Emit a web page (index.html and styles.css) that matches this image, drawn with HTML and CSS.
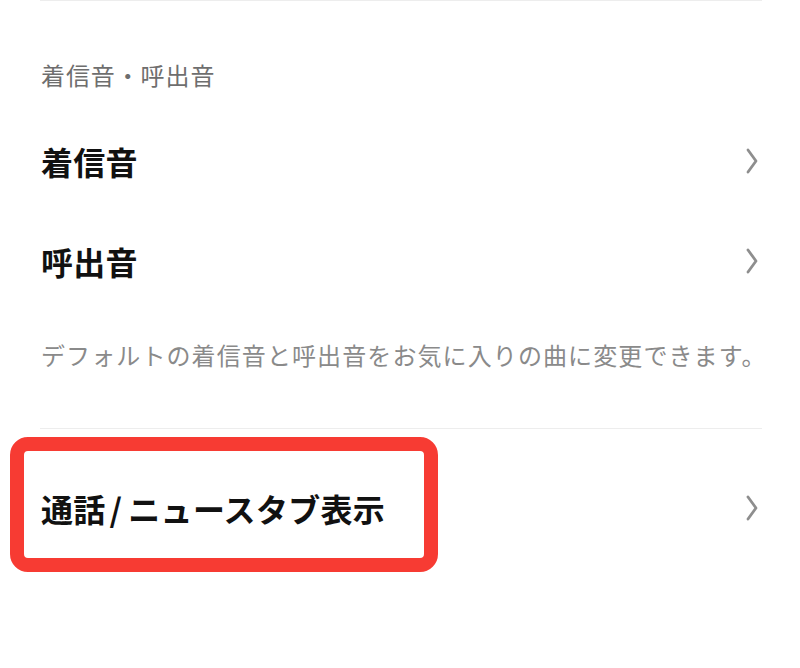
FILE: index.html
```html
<!DOCTYPE html>
<html lang="ja">
<head>
<meta charset="utf-8">
<link rel="stylesheet" href="styles.css">
</head>
<body>
<div class="page">
  <div class="divider divider-top"></div>
  <div class="section-header">着信音・呼出音</div>
  <div class="row">
    <span class="row-label">着信音</span>
    <svg class="chevron" viewBox="0 0 12 26" width="12" height="26"><path d="M2 2 L10 13 L2 24" fill="none" stroke="#8e8e8e" stroke-width="2.8" stroke-linecap="round" stroke-linejoin="round"/></svg>
  </div>
  <div class="row">
    <span class="row-label">呼出音</span>
    <svg class="chevron" viewBox="0 0 12 26" width="12" height="26"><path d="M2 2 L10 13 L2 24" fill="none" stroke="#8e8e8e" stroke-width="2.8" stroke-linecap="round" stroke-linejoin="round"/></svg>
  </div>
  <div class="description">デフォルトの着信音と呼出音をお気に入りの曲に変更できます。</div>
  <div class="divider divider-mid"></div>
  <div class="row">
    <span class="row-label">通話<span class="slash">/</span>ニュースタブ表示</span>
    <svg class="chevron" viewBox="0 0 12 26" width="12" height="26"><path d="M2 2 L10 13 L2 24" fill="none" stroke="#8e8e8e" stroke-width="2.8" stroke-linecap="round" stroke-linejoin="round"/></svg>
  </div>
  <div class="highlight"></div>
</div>
</body>
</html>
```
FILE: styles.css
```css
html, body {
  margin: 0;
  padding: 0;
  background: #ffffff;
}
.page {
  position: relative;
  width: 800px;
  height: 668px;
  overflow: hidden;
  font-family: "Noto Sans CJK JP", "Noto Sans", sans-serif;
}
.divider {
  height: 1px;
  background: #ededed;
  margin: 0 38px 0 40px;
}
.section-header {
  margin: 56px 0 0 41px;
  line-height: 36px;
  font-size: 24px;
  color: #6e6e6e;
  letter-spacing: 0.9px;
}
.row {
  display: flex;
  align-items: center;
  justify-content: space-between;
  height: 100px;
  padding: 0 42px 0 41px;
}
.section-header + .row {
  margin-top: 18px;
}
.row-label {
  font-size: 32px;
  font-weight: 700;
  color: #111111;
  letter-spacing: 0.3px;
}
.slash {
  margin: 0 6px 0 4px;
}
.chevron {
  display: block;
}
.description {
  margin: 26px 0 0 41px;
  line-height: 36px;
  font-size: 24px;
  color: #8a8a8a;
  letter-spacing: 1.1px;
}
.divider-mid {
  margin-top: 55px;
}
.divider-mid + .row {
  margin-top: 29px;
}
.highlight {
  position: absolute;
  left: 10px;
  top: 437px;
  width: 400px;
  height: 107px;
  border: 14px solid #f73b33;
  border-radius: 18px;
}
```
